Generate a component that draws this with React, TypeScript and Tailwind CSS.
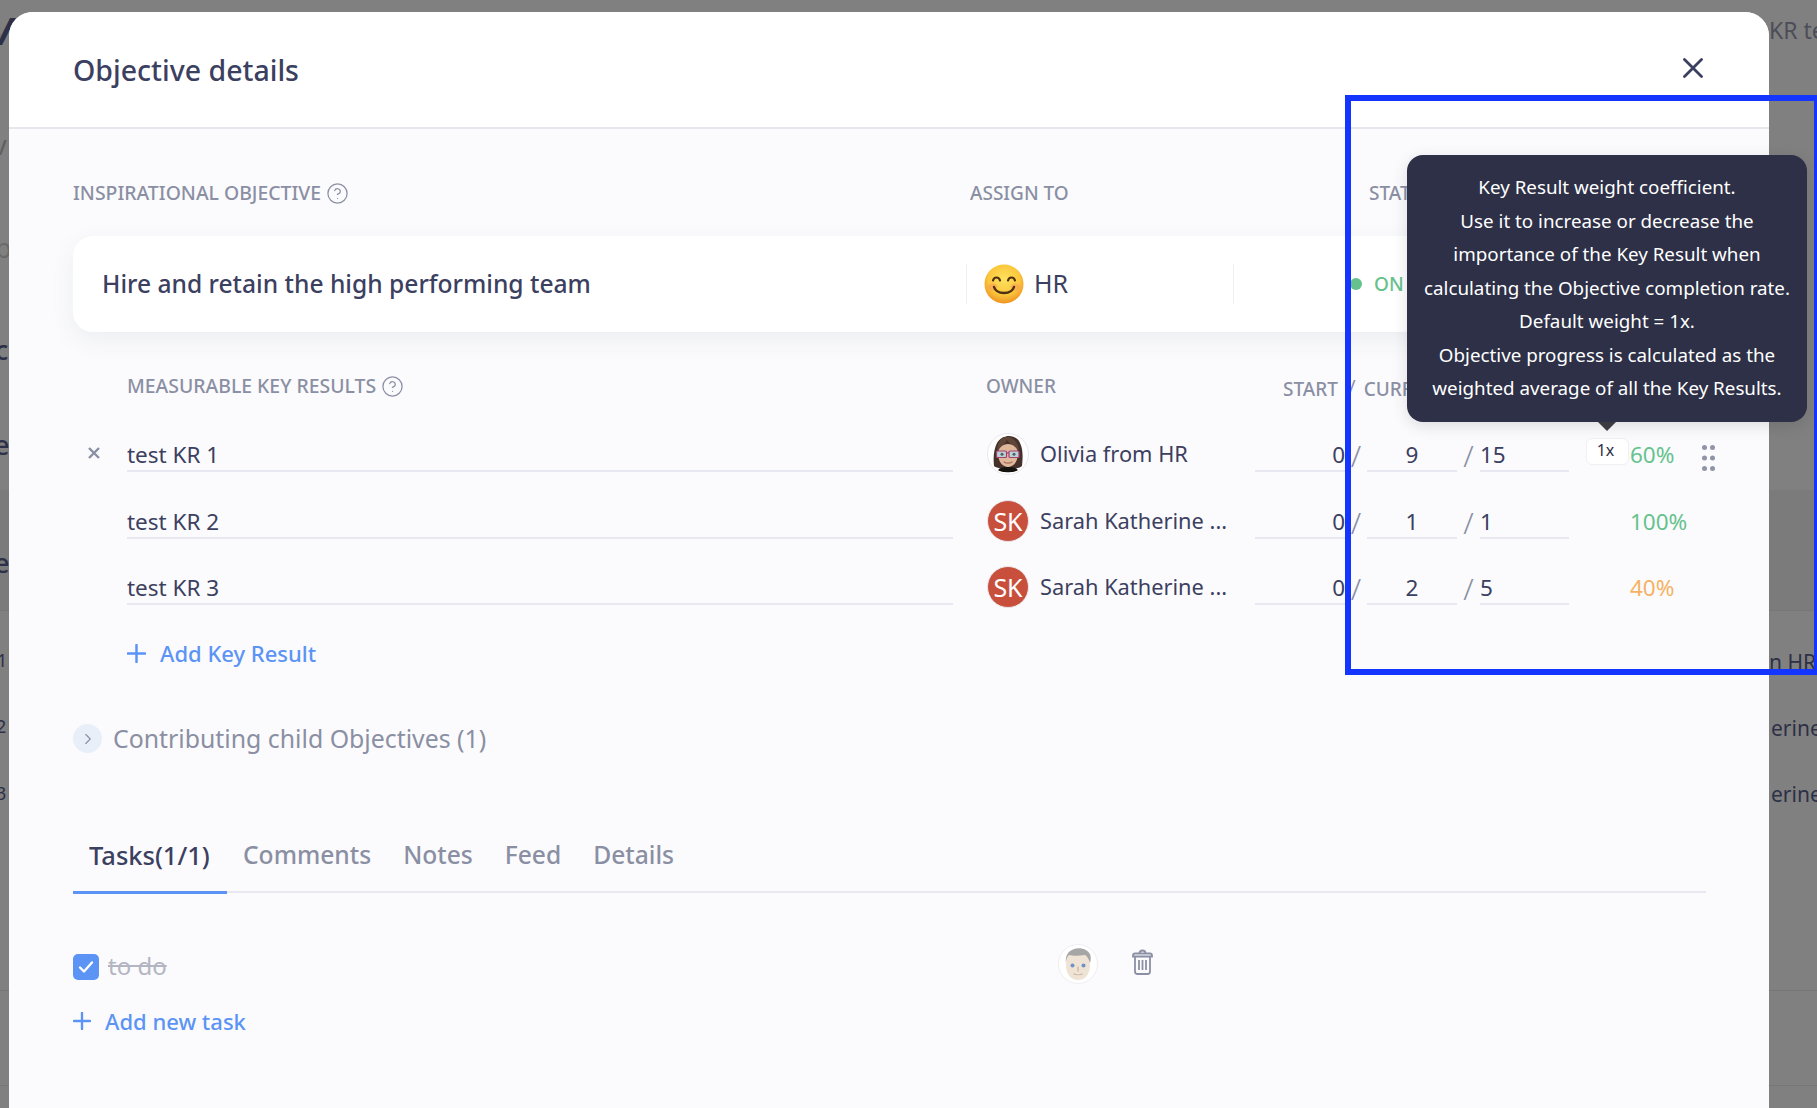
import { ChevronRight, CircleHelp } from "lucide-react";

const krs = [
  { name: "test KR 1", owner: "Olivia from HR", start: "0", cur: "9", target: "15", pct: "60%", tone: "text-[#66c28d]", active: true },
  { name: "test KR 2", owner: "Sarah Katherine ...", start: "0", cur: "1", target: "1", pct: "100%", tone: "text-[#66c28d]", active: false },
  { name: "test KR 3", owner: "Sarah Katherine ...", start: "0", cur: "2", target: "5", pct: "40%", tone: "text-[#f5b264]", active: false },
];

const tabs = ["Comments", "Notes", "Feed", "Details"];

const tooltip = [
  "Key Result weight coefficient.",
  "Use it to increase or decrease the",
  "importance of the Key Result when",
  "calculating the Objective completion rate.",
  "Default weight = 1x.",
  "Objective progress is calculated as the",
  "weighted average of all the Key Results.",
];

function PlusIcon({ size }: { size: number }) {
  return (
    <svg width={size} height={size} viewBox="0 0 20 20" className="shrink-0 text-[#5b94f5]">
      <path d="M10 1v18M1 10h18" stroke="currentColor" strokeWidth="2.6" strokeLinecap="round" />
    </svg>
  );
}

function Smiley() {
  return (
    <svg width="40" height="40" viewBox="0 0 40 40" className="shrink-0">
      <defs>
        <radialGradient id="smile" cx="50%" cy="38%" r="62%">
          <stop offset="0%" stopColor="#fde25e" />
          <stop offset="65%" stopColor="#fbc63c" />
          <stop offset="100%" stopColor="#ee9322" />
        </radialGradient>
      </defs>
      <circle cx="20" cy="20" r="19.5" fill="url(#smile)" />
      <ellipse cx="8.5" cy="23" rx="5" ry="3.5" fill="#f79a5a" opacity="0.55" />
      <ellipse cx="31.5" cy="23" rx="5" ry="3.5" fill="#f79a5a" opacity="0.55" />
      <path d="M9 16.5c1-4 6-4 7 0M24 16.5c1-4 6-4 7 0" fill="none" stroke="#4f2f12" strokeWidth="2.2" strokeLinecap="round" />
      <path d="M10 23c2.5 8 17.5 8 20 0" fill="none" stroke="#4f2f12" strokeWidth="2.4" strokeLinecap="round" />
    </svg>
  );
}

function OliviaAvatar() {
  return (
    <svg width="42" height="42" viewBox="0 0 42 42" className="shrink-0">
      <circle cx="21" cy="21" r="20.5" fill="#fff" stroke="#e8e8ee" />
      <path d="M7 33c-1-9 0-17 3-23 3-5 8-7 12-7s9 2 11 7c3 6 3 14 2 23-4 4-24 4-28 0z" fill="#45302a" />
      <path d="M16 4c-4 4-6 8-6 13 4-2 8-6 10-10 3 4 7 8 12 10-1-6-4-11-9-13z" fill="#604638" />
      <path d="M11 20c0-5 5-9 10-9s10 4 10 9c0 9-5 14-10 14S11 29 11 20z" fill="#dfb89c" />
      <rect x="9.5" y="18" width="10" height="6.500" rx="1" fill="#b9d0d6" stroke="#a8406f" strokeWidth="1.200" />
      <rect x="22" y="18" width="10" height="6.500" rx="1" fill="#b9d0d6" stroke="#a8406f" strokeWidth="1.200" />
      <path d="M19.500 20h2.500" stroke="#a8406f" strokeWidth="1.200" />
      <circle cx="15" cy="21.200" r="1.500" fill="#4d6068" />
      <circle cx="27" cy="21.200" r="1.500" fill="#4d6068" />
      <path d="M17 29c2 1.500 6 1.500 8 0" fill="none" stroke="#a86f5a" strokeWidth="1.200" strokeLinecap="round" />
      <path d="M11 37c3-3 6-3 10-3s7 0 10 3c-3 3-17 3-20 0z" fill="#16120f" />
    </svg>
  );
}

function ManAvatar() {
  return (
    <svg width="42" height="40" viewBox="0 0 42 40" className="shrink-0">
      <circle cx="21" cy="20" r="19.500" fill="#fff" stroke="#eeeef3" />
      <path d="M9 21c0-9 5-14 12-14s12 5 12 14c0 9-5 15-12 15S9 30 9 21z" fill="#efe3d5" />
      <path d="M9 19c-1-7 2-12 8-14 6-2 13 0 16 5 1 3 1 6 0 9-1-4-3-7-5-8-6 1-12 1-16 0-2 2-3 5-3 8z" fill="#a6a6a6" />
      <circle cx="15.500" cy="21.500" r="2" fill="#6d93c6" />
      <circle cx="26.500" cy="21.500" r="2" fill="#6d93c6" />
      <path d="M21 23v4M17 30c2 1 6 1 8 0" fill="none" stroke="#c9b19d" strokeWidth="1.200" strokeLinecap="round" />
    </svg>
  );
}

function TrashIcon() {
  return (
    <svg width="21" height="26" viewBox="0 0 21 26" fill="none" stroke="#8a8fa3" strokeWidth="1.800" className="shrink-0">
      <path d="M1 6.500c0-1.500.7-2 2-2h15c1.300 0 2 .5 2 2v1H1z" />
      <path d="M7.500 4.500c0-2 1-3 3-3s3 1 3 3" />
      <path d="M3 7.500v15c0 1.500 1 2.500 2.500 2.500h10c1.500 0 2.500-1 2.500-2.500v-15" />
      <path d="M7 11v10M10.500 11v10M14 11v10" />
    </svg>
  );
}

function DragDots() {
  return (
    <svg width="13" height="26" viewBox="0 0 13 26" className="shrink-0 text-[#8f94a8]" fill="currentColor">
      <circle cx="2.500" cy="2.500" r="2.500" />
      <circle cx="10.500" cy="2.500" r="2.500" />
      <circle cx="2.500" cy="13" r="2.500" />
      <circle cx="10.500" cy="13" r="2.500" />
      <circle cx="2.500" cy="23.500" r="2.500" />
      <circle cx="10.500" cy="23.500" r="2.500" />
    </svg>
  );
}

function Backdrop() {
  return (
    <div className="absolute inset-0 bg-[#808080]">
      <div className="absolute left-0 right-0 top-[490px] h-[120px] bg-[#7b7b7b]" />
      <div className="absolute left-0 right-0 top-[610px] h-px bg-[#777777]" />
      <div className="absolute left-0 right-0 top-[990px] h-px bg-[#767676]" />
      <div className="absolute left-0 right-0 top-[1085px] h-px bg-[#767676]" />
      <div className="relative flex justify-between text-[#2d3047]">
        <div className="flex w-[9px] flex-col text-[27px] leading-[30px] font-medium">
          <span className="mt-[15px] -ml-[10px] text-[38px] italic font-bold">V</span>
          <span className="mt-[85px] -ml-[7px] text-[#606060] font-normal">v</span>
          <span className="mt-[73px] -ml-[5px] text-[#6a6a6a] font-normal">b</span>
          <span className="mt-[72px] -ml-[5px]">c</span>
          <span className="mt-[65px] -ml-[6px]">e</span>
          <span className="mt-[88px] -ml-[6px]">e</span>
          <span className="mt-[67px] -ml-[3px] text-[18px] leading-[30px] font-normal">1</span>
          <span className="mt-[36px] -ml-[4px] text-[18px] leading-[30px] font-normal">2</span>
          <span className="mt-[37px] -ml-[4px] text-[18px] leading-[30px] font-normal">3</span>
        </div>
        <div className="flex w-[48px] flex-col overflow-hidden text-[21px] leading-[30px] whitespace-nowrap">
          <span className="mt-[15px] text-[23px] text-[#4c4d57]">KR test</span>
          <span className="mt-[602px] text-right pr-[8px]">n HR</span>
          <span className="mt-[36px] pl-[2px]">erine</span>
          <span className="mt-[36px] pl-[2px]">erine</span>
        </div>
      </div>
    </div>
  );
}

export default function App() {
  return (
    <div className="relative h-[1108px] w-full overflow-hidden font-['Noto_Sans','Open_Sans',sans-serif] text-[#3b4060]">
      <Backdrop />

      <div className="absolute left-[9px] top-[12px] h-[1096px] w-[1760px] rounded-t-[24px] bg-[#fbfbfd]">
        <div className="flex h-[117px] items-center justify-between rounded-t-[24px] border-b-2 border-[#e6e6ec] bg-white pl-[64px] pr-[66px]">
          <div className="text-[28.500px] font-medium leading-[36px]">Objective details</div>
          <svg width="20" height="20" viewBox="0 0 20 20" className="-mt-[3px] text-[#3b4060]">
            <path d="M1.500 1.500l17 17M18.500 1.500l-17 17" stroke="currentColor" strokeWidth="2.800" strokeLinecap="round" />
          </svg>
        </div>

        <div className="pl-[64px] pr-[63px]">
          <div className="mt-[52px] flex h-[24px] text-[19px] font-medium leading-[24px] text-[#8a8fa3]">
            <div className="flex w-[897px] items-center gap-[5px] text-[19.400px]">
              INSPIRATIONAL OBJECTIVE <CircleHelp size={23} strokeWidth={1.300} />
            </div>
            <div className="w-[399px]">ASSIGN TO</div>
            <div>STATUS</div>
          </div>

          <div className="mt-[31px] flex h-[96px] items-center rounded-[20px] bg-white shadow-[0_8px_24px_rgba(60,66,100,0.07)]">
            <div className="w-[893px] shrink-0 pl-[29px] text-[24.600px] font-medium leading-[32px]">Hire and retain the high performing team</div>
            <div className="flex h-[40px] w-[268px] shrink-0 items-center gap-[10px] border-x border-[#f0f0f4] pl-[17px] text-[25px]">
              <Smiley /> HR
            </div>
            <div className="ml-[116px] h-[12px] w-[12px] shrink-0 rounded-full bg-[#66c28d]" />
            <div className="ml-[12px] text-[19px] font-medium whitespace-nowrap text-[#66c28d]">ON TRACK</div>
          </div>

          <div className="mt-[42px] ml-[54px] flex h-[24px] text-[19px] font-medium leading-[24px] text-[#8a8fa3]">
            <div className="flex h-[24px] w-[859px] shrink-0 items-center gap-[5px] text-[19.400px]">
              MEASURABLE KEY RESULTS <CircleHelp size={23} strokeWidth={1.300} />
            </div>
            <div className="w-[297px] shrink-0">OWNER</div>
            <div className="mt-[3px] flex h-[24px] items-center gap-[8px] whitespace-nowrap">
              START <span className="text-[28px] font-light leading-[24px]">/</span> CURRENT
            </div>
          </div>

          <div className="-mr-[20px] mt-[32px] flex flex-col gap-[21.500px]">
            {krs.map((kr) => (
              <div key={kr.name} className="flex h-[45px] text-[22.500px] leading-[30px]">
                <div className="flex h-[42px] w-[54px] shrink-0 items-center pl-[15px] pt-[4px]">
                  {kr.active && (
                    <svg width="12" height="12" viewBox="0 0 12 12" className="text-[#8a8fa3]">
                      <path d="M1 1l10 10M11 1L1 11" stroke="currentColor" strokeWidth="2.400" />
                    </svg>
                  )}
                </div>
                <div className="flex h-[42px] w-[826px] shrink-0 items-end border-b-2 border-[#e8e9f0]">{kr.name}</div>
                <div className="ml-[34px] mt-[3px] flex h-[42px] w-[268px] shrink-0 items-center gap-[11px] text-[21.800px]">
                  {kr.active ? (
                    <OliviaAvatar />
                  ) : (
                    <div className="flex h-[42px] w-[42px] shrink-0 items-center justify-center rounded-full border border-[#e8e8ee] bg-[#c94f3d] text-[25px] text-white">SK</div>
                  )}
                  <span className="whitespace-nowrap">{kr.owner}</span>
                </div>
                <div className="flex h-[42px] w-[90px] shrink-0 items-end justify-end border-b-2 border-[#e8e9f0]">{kr.start}</div>
                <div className="flex h-[42px] w-[22px] shrink-0 items-end justify-center pb-[1px] text-[30px] font-light text-[#8a8fa3]">/</div>
                <div className="flex h-[42px] w-[90px] shrink-0 items-end justify-center border-b-2 border-[#e8e9f0]">{kr.cur}</div>
                <div className="flex h-[42px] w-[23px] shrink-0 items-end justify-center pb-[1px] text-[30px] font-light text-[#8a8fa3]">/</div>
                <div className="flex h-[42px] w-[89px] shrink-0 items-end border-b-2 border-[#e8e9f0]">{kr.target}</div>
                <div className="ml-[17px] w-[43px] shrink-0">
                  {kr.active && (
                    <div className="mt-[8px] flex h-[27px] w-[43px] items-center justify-center rounded-[6px] border border-[#f0f0f4] bg-white pb-[4px] pr-[4px] text-[16px] leading-[18px] text-[#2d3047]">1x</div>
                  )}
                </div>
                <div className={`ml-px mt-[10px] w-[72px] shrink-0 ${kr.tone}`}>{kr.pct}</div>
                {kr.active && (
                  <div className="mt-[15px] shrink-0">
                    <DragDots />
                  </div>
                )}
              </div>
            ))}
          </div>

          <div className="mt-[33px] ml-[54px] flex h-[24px] items-center gap-[14px] text-[22px] font-medium text-[#5b94f5]">
            <PlusIcon size={19} /> Add Key Result
          </div>

          <div className="mt-[59px] flex h-[29px] items-center gap-[11px] text-[24.850px] text-[#8a8fa3]">
            <div className="flex h-[29px] w-[29px] items-center justify-center rounded-full bg-[#e9eff8]">
              <ChevronRight size={18} strokeWidth={1.500} />
            </div>
            Contributing child Objectives (1)
          </div>

          <div className="mt-[81px] flex h-[59px] border-b-2 border-[#e8e9f0] text-[24.600px] leading-[32px] text-[#8a8fa3]">
            <div className="h-[60px] w-[154px] shrink-0 border-b-[3px] border-[#5b94f5] pl-4 pt-[5px] text-[25.500px] font-medium whitespace-nowrap text-[#3b4060]">Tasks(1/1)</div>
            {tabs.map((tab) => (
              <div key={tab} className="h-[60px] px-4 pt-[5px] font-medium">{tab}</div>
            ))}
          </div>

          <div className="mt-[51px] flex h-[40px]">
            <div className="flex w-[984px] shrink-0 items-start">
              <div className="mt-[10px] flex h-[26px] w-[26px] items-center justify-center rounded-[5px] bg-[#5b94f5]">
                <svg width="16" height="14" viewBox="0 0 16 14" fill="none">
                  <path d="M2 7.500l4 4 8-9" stroke="#fff" strokeWidth="2.400" strokeLinecap="round" strokeLinejoin="round" />
                </svg>
              </div>
              <div className="ml-[9px] mt-[7px] text-[24px] leading-[30px] text-[#b3b6c2] line-through">to do</div>
            </div>
            <ManAvatar />
            <div className="ml-[33px] mt-[5px]">
              <TrashIcon />
            </div>
          </div>

          <div className="mt-[25px] flex h-[24px] items-center gap-[14px] text-[22px] font-medium text-[#5b94f5]">
            <PlusIcon size={18} /> Add new task
          </div>
        </div>

        <div className="absolute left-[1398px] top-[143px] flex h-[267px] w-[400px] flex-col items-center justify-center rounded-[16px] bg-[#2d3047] text-[18.800px] leading-[33.600px] text-white shadow-[0_4px_16px_rgba(0,0,0,0.12)]">
          {tooltip.map((line) => (
            <div key={line} className="whitespace-nowrap">{line}</div>
          ))}
          <div className="absolute left-[191px] top-[267px] h-0 w-0 border-x-[9px] border-t-[9px] border-x-transparent border-t-[#3a3a40]" />
        </div>
      </div>

      <div className="absolute left-[1345px] top-[95px] h-[580px] w-[475px] border-[6px] border-[#1434ff]" />
    </div>
  );
}
